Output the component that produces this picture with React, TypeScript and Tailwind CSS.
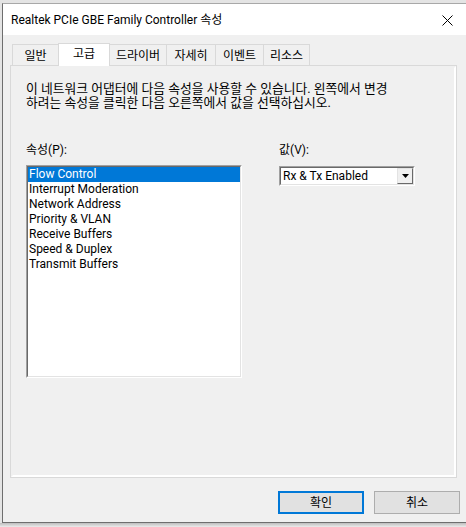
import React from "react";

const font = { fontFamily: 'Roboto, "Noto Sans CJK KR", sans-serif' };

const tabs = [
  { label: "일반", w: "w-[47px]" },
  { label: "고급", w: "w-[52px]", active: true },
  { label: "드라이버", w: "w-[58px]" },
  { label: "자세히", w: "w-[50px]" },
  { label: "이벤트", w: "w-[49px]" },
  { label: "리소스", w: "w-[47px]" },
];

const properties = [
  "Flow Control",
  "Interrupt Moderation",
  "Network Address",
  "Priority & VLAN",
  "Receive Buffers",
  "Speed & Duplex",
  "Transmit Buffers",
];

function CloseIcon() {
  return (
    <svg width="11" height="11" viewBox="0 0 11 11" className="text-black">
      <path d="M0.5 0.5 L10.5 10.5 M10.5 0.5 L0.5 10.5" stroke="currentColor" strokeWidth="1" />
    </svg>
  );
}

export default function App() {
  return (
    <div
      className="relative h-[527px] w-[466px] overflow-hidden bg-[#e4e4e4] text-[12px] text-black"
      style={font}
    >
      {/* Dialog window */}
      <div className="ml-[2px] mt-[3px] flex h-[520px] w-[480px] flex-col border-b border-l border-t border-b-[#6e6e6e] border-l-[#6e6e6e] border-t-[#a8a8a8] bg-[#f0f0f0]">
        {/* Title bar */}
        <div className="flex h-[31px] shrink-0 items-center bg-white pl-[8px]">
          <span className="leading-none">Realtek PCIe GBE Family Controller 속성</span>
          <div className="ml-auto mr-[29px] flex items-center pt-[1px]">
            <CloseIcon />
          </div>
        </div>

        {/* Tabs */}
        <div className="mt-[8px] flex items-end pl-[9px]">
          {tabs.map((t, i) =>
            t.active ? (
              <div
                key={t.label}
                className={`relative z-10 -mb-px -ml-px flex h-[23px] ${t.w} items-start justify-center border-l border-r border-t border-[#d9d9d9] bg-white pt-[2px] leading-[16px]`}
              >
                {t.label}
              </div>
            ) : (
              <div
                key={t.label}
                className={`flex h-[21px] ${t.w} ${i > 0 ? "-ml-px" : ""} items-center justify-center border-l border-r border-t border-[#d9d9d9] bg-[#f0f0f0] pt-[1px] leading-[16px]`}
              >
                {t.label}
              </div>
            )
          )}
        </div>

        {/* Tab panel */}
        <div className="ml-[7px] h-[413px] w-[447px] shrink-0 border border-[#d9d9d9]">
          <div className="flex h-full w-full flex-col border-2 border-white border-t-[#f0f0f0] border-l-[#f0f0f0] pl-[13px] pt-[14px]">
            <p className="text-[12.8px] leading-[14px]">
              이 네트워크 어댑터에 다음 속성을 사용할 수 있습니다. 왼쪽에서 변경
              <br />
              하려는 속성을 클릭한 다음 오른쪽에서 값을 선택하십시오.
            </p>

            <div className="mt-[33px] flex gap-[37px]">
              {/* Property list */}
              <div className="flex w-[216px] flex-col">
                <span className="mb-[8px] leading-[14px]">속성(P):</span>
                <div className="h-[213px] w-[216px] border border-b-white border-l-[#a0a0a0] border-r-white border-t-[#a0a0a0]">
                  <div className="h-full w-full border border-b-[#e3e3e3] border-l-[#696969] border-r-[#e3e3e3] border-t-[#696969] bg-white">
                    {properties.map((p, i) => (
                      <div
                        key={p}
                        className={`h-[15px] pl-[1px] leading-[15px] ${
                          i === 0 ? "bg-[#0078d7] text-white" : ""
                        }`}
                      >
                        {p}
                      </div>
                    ))}
                  </div>
                </div>
              </div>

              {/* Value */}
              <div className="flex flex-col">
                <span className="mb-[8px] leading-[14px]">값(V):</span>
                <div className="mt-[1px] h-[20px] w-[136px] border border-b-white border-l-[#a0a0a0] border-r-white border-t-[#a0a0a0]">
                  <div className="flex h-full w-full items-stretch border border-b-[#e3e3e3] border-l-[#696969] border-r-[#e3e3e3] border-t-[#696969] bg-white">
                    <span className="flex-1 pl-[2px] leading-[16px]">Rx &amp; Tx Enabled</span>
                    <div className="flex w-[16px] items-center justify-center border border-b-[#696969] border-l-[#e3e3e3] border-r-[#696969] border-t-[#e3e3e3] bg-[#f0f0f0]">
                      <svg width="7" height="4" viewBox="0 0 7 4">
                        <path d="M0 0 H7 L3.5 4 Z" fill="#000" />
                      </svg>
                    </div>
                  </div>
                </div>
              </div>
            </div>
          </div>
        </div>

        {/* Buttons */}
        <div className="mt-[13px] flex gap-[10px] pl-[275px]">
          <button className="h-[23px] w-[86px] border-2 border-[#0078d7] bg-[#e1e1e1] leading-none">
            확인
          </button>
          <button className="h-[23px] w-[86px] border border-[#adadad] bg-[#e1e1e1] leading-none">
            취소
          </button>
        </div>
      </div>

      {/* Shadow below window */}
      <div className="h-[4px] w-full bg-gradient-to-b from-[#bdbdbd] to-[#ececec]" />
    </div>
  );
}
